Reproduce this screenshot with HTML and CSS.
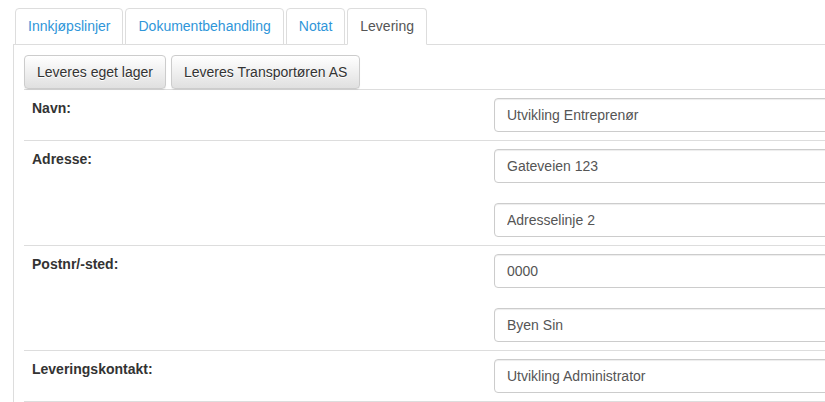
FILE: index.html
```html
<!DOCTYPE html>
<html lang="no">
<head>
<meta charset="utf-8">
<title>Levering</title>
<link rel="stylesheet" href="styles.css">
</head>
<body>
<div class="page">
  <ul class="tabs">
    <li class="tab"><a href="#">Innkjøpslinjer</a></li>
    <li class="tab"><a href="#">Dokumentbehandling</a></li>
    <li class="tab"><a href="#">Notat</a></li>
    <li class="tab active"><a href="#">Levering</a></li>
  </ul>
  <div class="tab-content">
    <div class="toolbar">
      <button class="btn">Leveres eget lager</button>
      <button class="btn">Leveres Transportøren AS</button>
    </div>
    <table class="form-table">
      <tr>
        <td class="label">Navn:</td>
        <td class="field"><div class="inputs"><input class="input" value="Utvikling Entreprenør"></div></td>
      </tr>
      <tr>
        <td class="label">Adresse:</td>
        <td class="field"><div class="inputs"><input class="input" value="Gateveien 123"><input class="input" value="Adresselinje 2"></div></td>
      </tr>
      <tr>
        <td class="label">Postnr/-sted:</td>
        <td class="field"><div class="inputs"><input class="input" value="0000"><input class="input" value="Byen Sin"></div></td>
      </tr>
      <tr>
        <td class="label">Leveringskontakt:</td>
        <td class="field"><div class="inputs"><input class="input" value="Utvikling Administrator"></div></td>
      </tr>
    </table>
  </div>
</div>
</body>
</html>
```

FILE: styles.css
```css
html, body {
  margin: 0;
  padding: 0;
  background: #fff;
  overflow: hidden;
}
body {
  font-family: "Liberation Sans", Arial, sans-serif;
  font-size: 14px;
  line-height: 20px;
  color: #333;
}
.page {
  box-sizing: border-box;
  padding: 8px 0 0 13px;
  width: 825px;
  height: 402px;
  overflow: hidden;
}
.tabs {
  list-style: none;
  margin: 0;
  padding: 0 0 0 2px;
  display: flex;
  border-bottom: 1px solid #ddd;
}
.tab {
  margin: 0 2px -1px 0;
}
.tab a {
  display: block;
  padding: 7px 12px 8px;
  border: 1px solid #ddd;
  border-radius: 4px 4px 0 0;
  color: #2f96d9;
  text-decoration: none;
  background: #fff;
}
.tab.active a {
  color: #555;
  border-bottom-color: transparent;
}
.tab-content {
  border-left: 1px solid #ddd;
  padding: 10px 0 0 10px;
  height: 400px;
  overflow: hidden;
}
.toolbar {
  display: flex;
  gap: 5px;
}
.btn {
  font-family: inherit;
  font-size: 14px;
  line-height: 20px;
  height: 34px;
  padding: 6px 12px;
  color: #333;
  border: 1px solid #ccc;
  border-radius: 4px;
  background: linear-gradient(to bottom, #fff 0, #e0e0e0 100%);
  text-shadow: 0 1px 0 #fff;
  box-shadow: inset 0 1px 0 rgba(255,255,255,.15), 0 1px 1px rgba(0,0,0,.075);
  cursor: pointer;
}
.form-table {
  border-collapse: collapse;
  width: 924px;
}
.form-table td {
  border-top: 1px solid #ddd;
  border-bottom: 1px solid #ddd;
  padding: 8px;
  vertical-align: top;
}
.label {
  width: 446px;
  font-weight: bold;
}
.inputs {
  display: flex;
  flex-direction: column;
  gap: 20px;
}
.input {
  display: block;
  box-sizing: border-box;
  width: 100%;
  height: 34px;
  padding: 6px 12px;
  font-family: inherit;
  font-size: 14px;
  line-height: 20px;
  color: #555;
  border: 1px solid #ccc;
  border-radius: 4px;
  box-shadow: inset 0 1px 1px rgba(0,0,0,.075);
  background: #fff;
  margin: 0;
}
```
